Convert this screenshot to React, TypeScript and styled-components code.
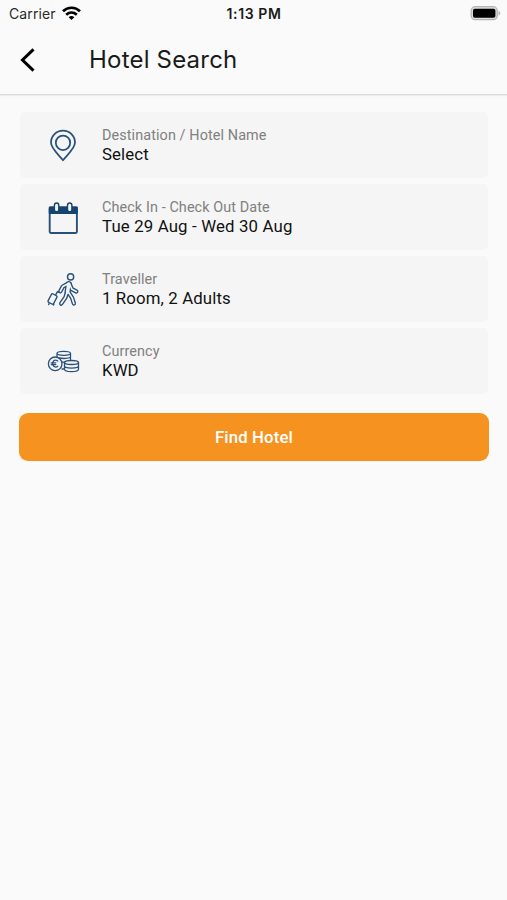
import React from "react";
import styled, { createGlobalStyle } from "styled-components";

const GlobalStyle = createGlobalStyle`
  * { box-sizing: border-box; }
  body { margin: 0; background: #fafafa; }
`;

const Screen = styled.div`
  width: 100%;
  min-height: 900px;
  background: #fafafa;
  color: #1a1a1a;
  font-family: Roboto, sans-serif;
`;

const StatusBar = styled.div`
  height: 27px;
  display: grid;
  grid-template-columns: 1fr auto 1fr;
  align-items: center;
  padding: 0 6px 0 9px;
  font-family: Inter, sans-serif;
  font-size: 14px;
  line-height: 27px;
`;

const Carrier = styled.div`
  display: flex;
  align-items: center;
  gap: 6px;
  letter-spacing: 0.1px;
  color: #2a2a2a;
`;

const Clock = styled.div`
  font-weight: 600;
  letter-spacing: 0.6px;
  margin-left: -2px;
`;

const BatterySlot = styled.div`
  display: flex;
  justify-content: flex-end;
`;

const Header = styled.header`
  height: 68px;
  display: flex;
  align-items: center;
  gap: 46px;
  padding: 0 19px 1px;
  border-bottom: 1px solid #dadada;
  box-shadow: 0 1px 1px rgba(0, 0, 0, 0.05);
`;

const BackButton = styled.button`
  display: flex;
  padding: 0;
  border: 0;
  background: none;
`;

const Title = styled.h1`
  margin: 0;
  font: 400 24px/30px Inter, sans-serif;
  letter-spacing: 0.2px;
`;

const Form = styled.main`
  display: flex;
  flex-direction: column;
  gap: 6px;
  padding: 17px 19px 0 20px;
`;

const Field = styled.div`
  height: 66px;
  display: flex;
  align-items: center;
  gap: 12px;
  padding-left: 20px;
  border-radius: 5px;
  background: #f5f5f5;
`;

const FieldIcon = styled.svg`
  width: 50px;
  height: 50px;
  flex: none;
  fill: none;
  stroke: #28507c;
  stroke-linejoin: round;
  stroke-linecap: round;
`;

const FieldText = styled.div`
  display: flex;
  flex-direction: column;
  padding-bottom: 1px;
`;

const Label = styled.span`
  font-size: 14.4px;
  line-height: 19px;
  letter-spacing: 0.1px;
  color: #808080;
`;

const Value = styled.span<{ $spacing: number }>`
  font-size: 16.8px;
  line-height: 19px;
  letter-spacing: ${(p) => p.$spacing}px;
  color: #111;
`;

const FindButton = styled.button`
  height: 48px;
  margin: 13px -1px 0;
  padding: 0;
  border: 0;
  border-radius: 9px;
  background: #f69320;
  color: #fff;
  font: 500 16.8px/48px Roboto, sans-serif;
  letter-spacing: 0.12px;
`;

const PinIcon = () => (
  <FieldIcon viewBox="0 0 50 50" strokeWidth="1.75">
    <path d="M23 40.2C18.5 34.5 11 28.5 11 22.6a12 12 0 0 1 24 0C35 28.5 27.5 34.5 23 40.2Z" />
    <circle cx="23" cy="22.8" r="7.200" />
  </FieldIcon>
);

const CalendarIcon = () => (
  <FieldIcon viewBox="0 0 50 50" strokeWidth="1.9">
    <rect x="9.7" y="15.5" width="27.2" height="25.5" rx="1.2" />
    <path d="M9.700 15.500h27.200v5.500H9.700z" fill="#17446f" stroke="#17446f" />
    <rect x="14.4" y="11" width="4.4" height="8.700" rx="2.2" fill="#f5f5f5" stroke="#17446f" strokeWidth="1.4" />
    <rect x="27.5" y="11" width="4.4" height="8.700" rx="2.2" fill="#f5f5f5" stroke="#17446f" strokeWidth="1.4" />
  </FieldIcon>
);

const TravellerIcon = () => {
  const limbs = "M27.600 20 22.800 22.600 20.300 27.300M29.800 20.500 32 25.300 36.300 27.400M27.200 28 25.400 33.500 21.200 39.600M28.600 28.500 32 33.600 33.900 39.400";
  const torso = "M28.700 20 27.600 28";
  return (
    <FieldIcon viewBox="0 0 50 50" strokeWidth="1.4">
      <path d={limbs} strokeWidth="4.400" />
      <path d={torso} strokeWidth="6.200" />
      <path d={limbs} stroke="#f5f5f5" strokeWidth="1.700" />
      <path d={torso} stroke="#f5f5f5" strokeWidth="3.500" />
      <circle cx="30.600" cy="12.900" r="3.100" />
      <rect x="9.400" y="30.300" width="6.200" height="9.400" rx="1.300" transform="rotate(28 12.500 35)" />
      <path d="m15.900 30.300 1.600-2.600 1.500.3M9 39.800l-.3.700M13.800 40.200l-.3.800" />
    </FieldIcon>
  );
};

const CurrencyIcon = () => (
  <FieldIcon viewBox="0 0 50 50" strokeWidth="1.3">
    <path d="M17 20.500v-3c0-2.800 13.500-2.800 13.500 0V24M17 17.500c0 2.400 13.500 2.400 13.500 0M19.500 22c3.500.8 9 .6 11-.7M22 26.200l2.500-.1" />
    <path d="M24.500 26.500v6.700c0 3.200 14 3.200 14 0v-6.700M24.500 30c0 2.700 14 2.700 14 0M22 33h2.500" />
    <ellipse cx="31.500" cy="26.500" rx="7" ry="2" />
    <circle cx="15.200" cy="27.800" r="6.800" />
    <path d="M17.800 25c-3.600-2.500-6.100 1.200-4.900 4 .8 2.100 3.200 2.700 4.900 1.300M11.200 26.800h4.600M11.200 28.600h4.600" />
  </FieldIcon>
);

const WifiIcon = () => (
  <svg width="19" height="15" viewBox="0 0 19 15" fill="none" stroke="#000" strokeWidth="2.700">
    <path d="M1 5.200C5.800.6 13.200.6 18 5.200M4.200 8.700c3.100-2.800 7.500-2.800 10.600 0" />
    <path d="M9.500 14 6.700 11.200c1.600-1.500 4-1.500 5.600 0Z" fill="#000" stroke="none" />
  </svg>
);

const BatteryIcon = () => (
  <svg width="31" height="15" viewBox="0 0 31 15">
    <rect x="1.200" y=".7" width="26" height="13" rx="4" fill="#dcdcdc" stroke="#b5b5b5" strokeWidth="1.300" />
    <rect x="3" y="2.700" width="22.400" height="9" rx="1.800" fill="#000" />
    <path d="M28.500 5c2.300.7 2.300 3.800 0 4.500Z" fill="#b5b5b5" />
  </svg>
);

const fields = [
  { label: "Destination / Hotel Name", value: "Select", spacing: 0.1, Icon: PinIcon },
  { label: "Check In - Check Out Date", value: "Tue 29 Aug - Wed 30 Aug", spacing: 0.16, Icon: CalendarIcon },
  { label: "Traveller", value: "1 Room, 2 Adults", spacing: 0.13, Icon: TravellerIcon },
  { label: "Currency", value: "KWD", spacing: 0.1, Icon: CurrencyIcon },
];

export default function App() {
  return (
    <Screen>
      <GlobalStyle />
      <StatusBar>
        <Carrier>
          Carrier
          <WifiIcon />
        </Carrier>
        <Clock>1:13 PM</Clock>
        <BatterySlot>
          <BatteryIcon />
        </BatterySlot>
      </StatusBar>
      <Header>
        <BackButton aria-label="Back">
          <svg width="24" height="26" viewBox="0 0 24 26" fill="none" stroke="#000" strokeWidth="3">
            <path d="M14.500 2.300 3.500 13l11 10.700" />
          </svg>
        </BackButton>
        <Title>Hotel Search</Title>
      </Header>
      <Form>
        {fields.map(({ label, value, spacing, Icon }) => (
          <Field key={label}>
            <Icon />
            <FieldText>
              <Label>{label}</Label>
              <Value $spacing={spacing}>{value}</Value>
            </FieldText>
          </Field>
        ))}
        <FindButton>Find Hotel</FindButton>
      </Form>
    </Screen>
  );
}
